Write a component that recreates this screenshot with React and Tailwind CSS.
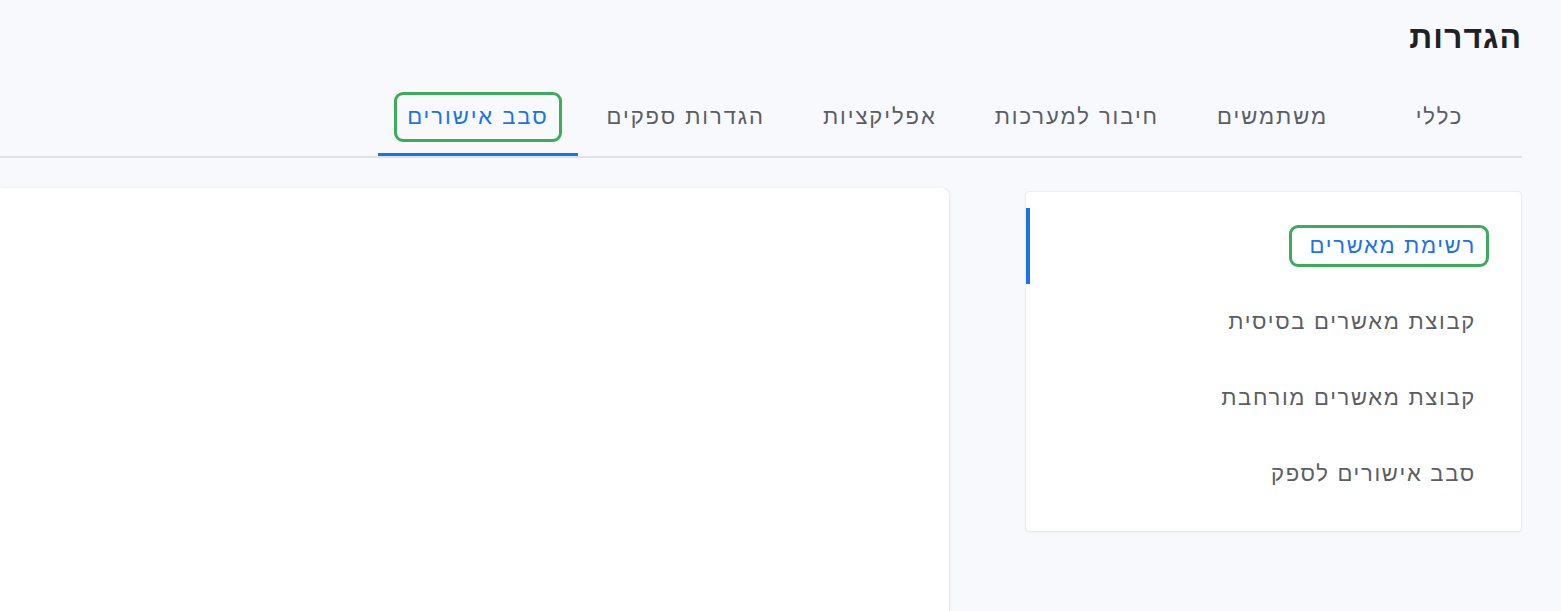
import React from "react";

const tabs = ["כללי", "משתמשים", "חיבור למערכות", "אפליקציות", "הגדרות ספקים", "סבב אישורים"];
const items = ["רשימת מאשרים", "קבוצת מאשרים בסיסית", "קבוצת מאשרים מורחבת", "סבב אישורים לספק"];

export default function App() {
  return (
    <div
      dir="rtl"
      className="min-h-[611px] overflow-hidden bg-[#f8f9fc] pr-[39px] font-['Liberation_Sans','DejaVu_Sans',sans-serif]"
    >
      <h1 className="pt-[17px] text-[32px] font-bold leading-[40px] tracking-[1px] text-[#202124]">הגדרות</h1>

      <div className="mt-[21px] flex border-b-2 border-[#dfe1e5]">
        {tabs.map((t, i) => {
          const active = i === tabs.length - 1;
          return (
            <div
              key={t}
              className={
                "flex h-[78px] min-w-[165px] items-center justify-center px-[29px] text-[22px] leading-[24px] tracking-[1.95px] " +
                (active
                  ? "border-b-[3px] border-[#1a73e8] pt-[3px] text-[#1a73e8]"
                  : "text-[#5a5e63]")
              }
            >
              {active ? (
                <span className="-mx-[13px] -my-[13px] rounded-[9px] border-[3px] border-[#3daa5c] px-[10px] py-[10px]">
                  {t}
                </span>
              ) : (
                t
              )}
            </div>
          );
        })}
      </div>

      <div className="mt-[30px] flex gap-[76px]">
        <div className="mt-[3px] h-[341px] w-[497px] shrink-0 rounded-[4px] border border-[#ebecef] bg-white pb-[18px] pt-[16px] shadow-[0_1px_2px_rgba(0,0,0,0.04)]">
          {items.map((it, i) => {
            const active = i === 0;
            return (
              <div
                key={it}
                className={
                  "flex h-[76px] items-center pr-[45px] text-[22px] leading-[24px] tracking-[1.7px] " +
                  (active ? "border-l-[4px] border-[#1a73e8] text-[#1a73e8]" : "text-[#5a5e63]")
                }
              >
                {active ? (
                  <span className="-ml-[21px] -mr-[13px] -my-[10px] rounded-[9px] border-[3px] border-[#3daa5c] pl-[18px] pr-[10px] py-[6px]">
                    {it}
                  </span>
                ) : (
                  it
                )}
              </div>
            );
          })}
        </div>
        <div className="h-[440px] flex-1 rounded-tr-[8px] bg-white shadow-[1px_0_3px_rgba(0,0,0,0.08)]" />
      </div>
    </div>
  );
}
